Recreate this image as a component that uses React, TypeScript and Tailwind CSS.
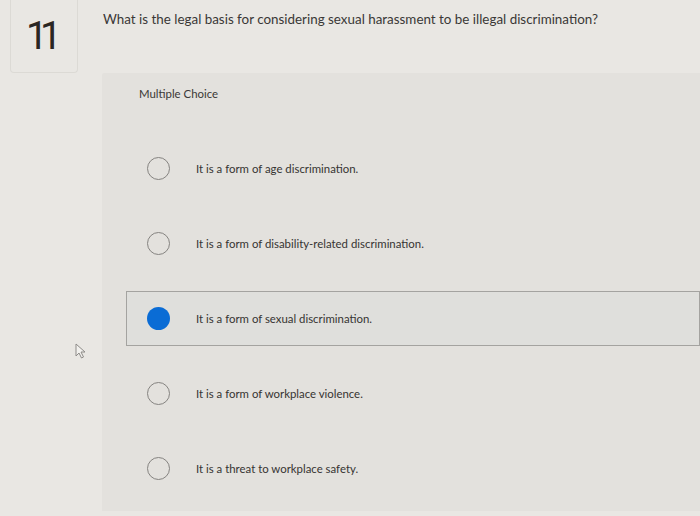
const options = [
  "It is a form of age discrimination.",
  "It is a form of disability-related discrimination.",
  "It is a form of sexual discrimination.",
  "It is a form of workplace violence.",
  "It is a threat to workplace safety.",
];

const selected = 2;

export default function App() {
  return (
    <div className="w-[700px] h-[516px] overflow-hidden bg-[#e9e7e3] font-['Lato',sans-serif] text-[#3c3a38] relative">
      {/* question header */}
      <div className="flex items-start">
        <div className="ml-[10px] w-[68px] h-[73px] rounded-b-[4px] border border-t-0 border-[#dcdad5] flex items-center justify-center">
          <span className="font-['Roboto',sans-serif] text-[39px] leading-none text-[#2a2623] tracking-[-8px] pr-[8px] mb-[-1px]">11</span>
        </div>
        <p className="ml-[25px] mt-[11px] text-[13.4px] leading-[16px] text-[#3a3836]">
          What is the legal basis for considering sexual harassment to be illegal discrimination?
        </p>
      </div>

      {/* answer panel */}
      <div className="ml-[102px] h-[438px] bg-[#e3e1dd] rounded-tl-[2px] pt-[14px]">
        <div className="ml-[37px] text-[11.4px] leading-[14px] text-[#3a3836]">Multiple Choice</div>
        <div className="mt-[40px] flex flex-col gap-[20px]">
          {options.map((o, i) => (
            <div
              key={o}
              className={
                i === selected
                  ? "ml-[24px] h-[55px] flex items-center border border-[#a4a3a0] bg-[#dfdfdc]"
                  : "ml-[24px] h-[55px] flex items-center border border-transparent"
              }
            >
              {i === selected ? (
                <span className="ml-[20px] w-[23px] h-[23px] rounded-full bg-[#0a6cd5]" />
              ) : (
                <span className="ml-[20px] w-[23px] h-[23px] rounded-full border-[1.5px] border-[#858380]" />
              )}
              <span className="ml-[26px] text-[11.4px] text-[#363432]">{o}</span>
            </div>
          ))}
        </div>
      </div>

      {/* mouse pointer */}
      <svg className="absolute left-[74px] top-[343px]" width="14" height="16" viewBox="0 0 14 16">
        <path d="M2 1 L2 13 L5 10 L7.5 15 L9.5 14 L7 9 L11 9 Z" fill="#f2f1ee" stroke="#8d8b88" strokeWidth="1" strokeLinejoin="round" />
      </svg>
    </div>
  );
}
